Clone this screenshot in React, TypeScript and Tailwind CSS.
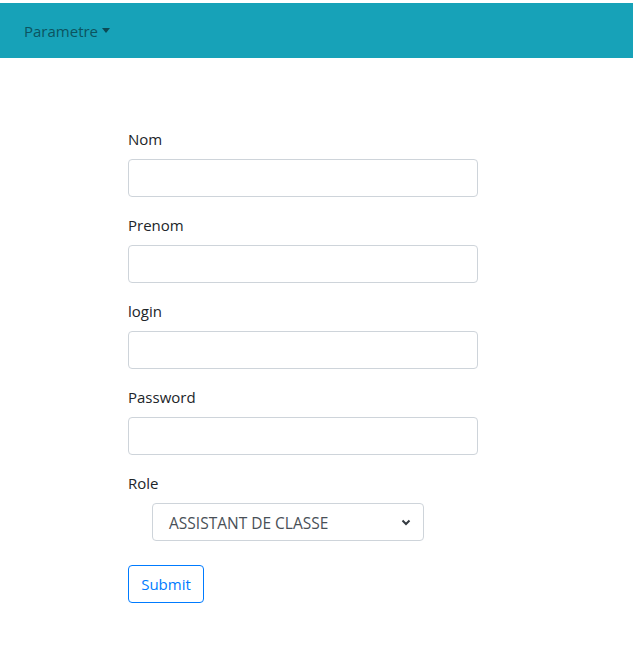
const App = () => {
  return (
    <div className="min-h-[657px] bg-white text-[#212529] font-['Open_Sans',_'Liberation_Sans',_sans-serif] text-[15px]">
      <div className="h-[3px]" />
      <nav className="flex items-center h-[55px] px-6 pt-[2px] bg-[#17a2b8]">
        <a href="#" className="flex items-center text-[#0c5460] text-[15px]">
          <span>Parametre</span>
          <span className="ml-[4px] mt-[-2px] border-x-[4.5px] border-x-transparent border-t-[5px] border-t-[#0c4a55]" />
        </a>
      </nav>
      <form className="w-[350px] ml-[128px] pt-[69px]">
        {["Nom", "Prenom", "login", "Password"].map((label) => (
          <div key={label} className="mb-4">
            <label className="block leading-6 mb-2">{label}</label>
            <input
              type={label === "Password" ? "password" : "text"}
              className="block w-full h-[38px] px-3 border border-[#ced4da] rounded"
            />
          </div>
        ))}
        <div className="mb-6">
          <label className="block leading-6 mb-2">Role</label>
          <div className="ml-6 w-[272px] h-[38px] flex items-center justify-between pl-4 pr-3 border border-[#ced4da] rounded text-[#495057] text-[15.5px]">
            <span className="pt-[3px]">ASSISTANT DE CLASSE</span>
            <svg width="10" height="8" viewBox="0 0 10 8">
              <path d="M1.5 2.5 L5 6 L8.5 2.5" fill="none" stroke="#343a40" strokeWidth="2" />
            </svg>
          </div>
        </div>
        <button type="button" className="h-[38px] w-[76px] border border-[#007bff] text-[#007bff] rounded">
          Submit
        </button>
      </form>
    </div>
  );
};

export default App;
